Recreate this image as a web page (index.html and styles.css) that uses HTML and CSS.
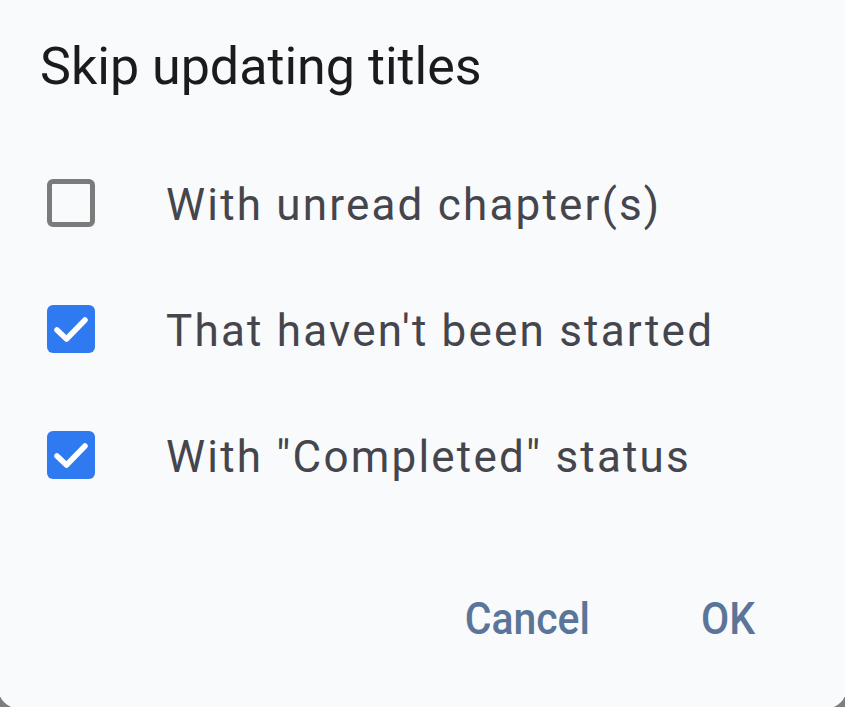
FILE: index.html
```html
<!DOCTYPE html>
<html lang="en">
<head>
    <meta charset="UTF-8">
    <meta name="viewport" content="width=device-width, initial-scale=1.0">
    <title>Skip updating titles</title>
    <link rel="stylesheet" href="styles.css">
</head>
<body>

<div class="dialog">
    <h2 class="dialog-title">Skip updating titles</h2>

    <div class="options">
        <label class="option">
            <span class="box"></span>
            <span class="option-text">With unread chapter(s)</span>
        </label>
        <label class="option">
            <span class="box checked">
                <svg viewBox="0 0 48 48" width="48" height="48"><path d="M10 25 L19.5 34 L38 15" fill="none" stroke="#fff" stroke-width="5.5" stroke-linecap="round" stroke-linejoin="round"/></svg>
            </span>
            <span class="option-text">That haven't been started</span>
        </label>
        <label class="option">
            <span class="box checked">
                <svg viewBox="0 0 48 48" width="48" height="48"><path d="M10 25 L19.5 34 L38 15" fill="none" stroke="#fff" stroke-width="5.5" stroke-linecap="round" stroke-linejoin="round"/></svg>
            </span>
            <span class="option-text">With "Completed" status</span>
        </label>
    </div>

    <div class="actions">
        <button type="button" class="btn"><span>Cancel</span></button>
        <button type="button" class="btn"><span>OK</span></button>
    </div>
</div>

</body>
</html>
```

FILE: styles.css
```css
body {
    margin: 0;
    background-color: #7d7d7d;
    overflow: hidden;
    font-family: Roboto, "Noto Sans", sans-serif;
}

.dialog {
    width: 849px;
    height: 709px;
    margin-left: -2px;
    box-sizing: border-box;
    padding: 0 0 0 42px;
    background-color: #f9fafb;
    border-radius: 0 0 22px 22px;
}

.dialog-title {
    margin: 0;
    padding-top: 37px;
    font-size: 52px;
    font-weight: 400;
    line-height: 60px;
    color: #1b1b1f;
}

.options {
    margin-top: 43px;
}

.option {
    display: flex;
    align-items: center;
    height: 126px;
}

.box {
    width: 48px;
    height: 48px;
    box-sizing: border-box;
    margin-left: 7px;
    border: 5px solid #7b7b7b;
    border-radius: 6px;
}

.box.checked {
    border: none;
    background-color: #2f7af0;
}

.box svg {
    display: block;
}

.option-text {
    margin-left: 71px;
    padding-top: 4px;
    font-size: 44px;
    letter-spacing: 2.2px;
    color: #45454d;
}

.actions {
    display: flex;
    justify-content: flex-end;
    margin-top: 75px;
    padding-right: 90px;
    gap: 104px;
}

.btn {
    background: none;
    border: none;
    padding: 0;
    font-family: Roboto, sans-serif;
    font-size: 44px;
    font-weight: 500;
    color: #5a7599;
    cursor: pointer;
}

.btn span {
    display: inline-block;
    transform: scaleX(0.93);
}
```
